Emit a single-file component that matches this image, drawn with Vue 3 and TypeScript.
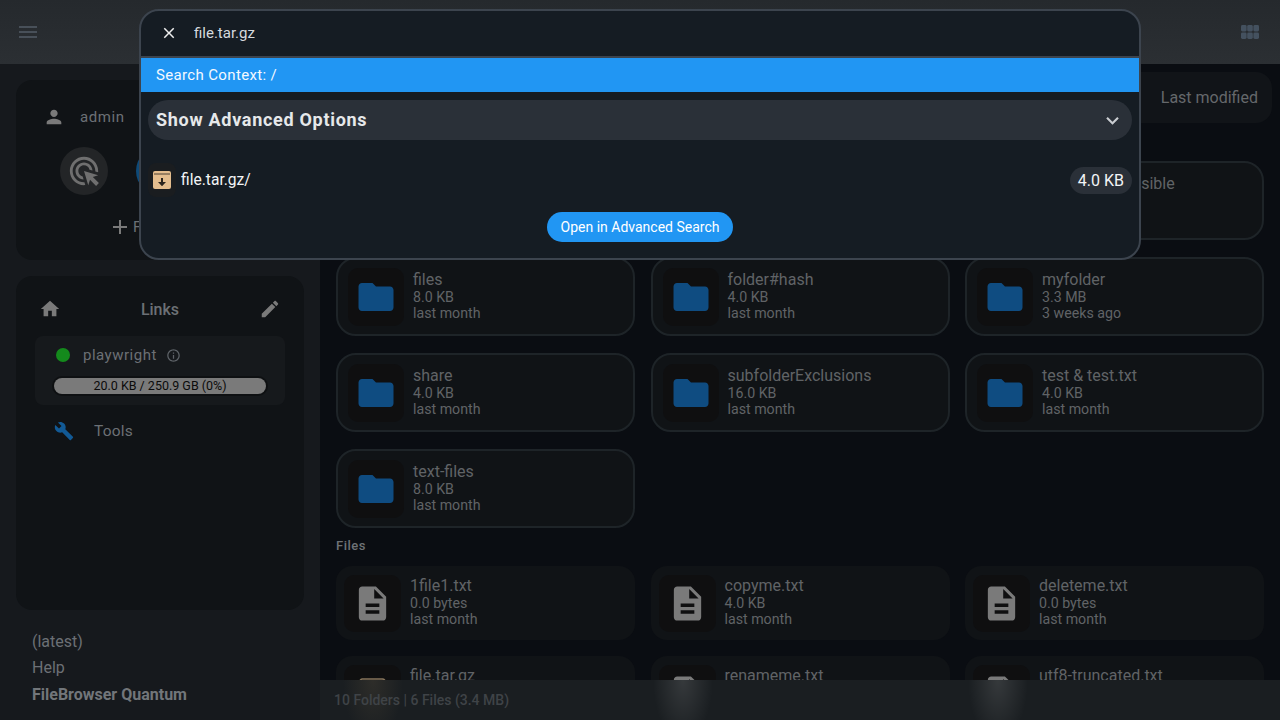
<script setup lang="ts">
const icons = {
  menu: 'M3 18h18v-2H3v2zm0-5h18v-2H3v2zm0-7v2h18V6H3z',
  close: 'M19 6.41L17.59 5 12 10.59 6.41 5 5 6.41 10.59 12 5 17.59 6.41 19 12 13.41 17.59 19 19 17.59 13.41 12z',
  person: 'M12 12c2.21 0 4-1.79 4-4s-1.79-4-4-4-4 1.79-4 4 1.79 4 4 4zm0 2c-2.67 0-8 1.34-8 4v2h16v-2c0-2.66-5.33-4-8-4z',
  click: 'M11.71,17.99C8.53,17.84,6,15.22,6,12c0-3.31,2.69-6,6-6c3.22,0,5.84,2.53,5.99,5.71l-2.1-0.63C15.48,9.31,13.89,8,12,8c-2.21,0-4,1.79-4,4c0,1.89,1.31,3.48,3.08,3.89L11.71,17.99z M22,12c0,0.3-0.01,0.6-0.04,0.9l-1.97-0.59C20,12.21,20,12.1,20,12c0-4.42-3.58-8-8-8s-8,3.58-8,8s3.58,8,8,8c0.1,0,0.21,0,0.31-0.01l0.59,1.97C12.6,21.99,12.3,22,12,22C6.48,22,2,17.52,2,12C2,6.48,6.48,2,12,2S22,6.48,22,12z M18.23,16.26L22,15l-10-3l3,10l1.26-3.77l4.27,4.27l1.98-1.98L18.23,16.26z',
  plus: 'M19 13h-6v6h-2v-6H5v-2h6V5h2v6h6v2z',
  home: 'M10 20v-6h4v6h5v-8h3L12 3 2 12h3v8z',
  edit: 'M3 17.25V21h3.75L17.81 9.94l-3.75-3.75L3 17.25zM20.71 7.04c.39-.39.39-1.02 0-1.41l-2.34-2.34c-.39-.39-1.02-.39-1.41 0l-1.83 1.83 3.75 3.75 1.83-1.83z',
  info: 'M11 7h2v2h-2zm0 4h2v6h-2zm1-9C6.48 2 2 6.48 2 12s4.48 10 10 10 10-4.48 10-10S17.52 2 12 2zm0 18c-4.41 0-8-3.59-8-8s3.59-8 8-8 8 3.59 8 8-3.59 8-8 8z',
  build: 'M22.7 19l-9.1-9.1c.9-2.3.4-5-1.5-6.9-2-2-5-2.4-7.4-1.3L9 6 6 9 1.6 4.7C.4 7.1.9 10.1 2.9 12.1c1.9 1.9 4.6 2.4 6.9 1.5l9.1 9.1c.4.4 1 .4 1.4 0l2.3-2.3c.5-.4.5-1.1.1-1.4z',
  folder: 'M10 4H4c-1.1 0-1.99.9-1.99 2L2 18c0 1.1.9 2 2 2h16c1.1 0 2-.9 2-2V8c0-1.1-.9-2-2-2h-8l-2-2z',
  file: 'M14 2H6c-1.1 0-1.99.9-1.99 2L4 20c0 1.1.89 2 1.99 2H18c1.1 0 2-.9 2-2V8l-6-6zm2 16H8v-2h8v2zm0-4H8v-2h8v2zm-3-5V3.5L18.5 9H13z',
  more: 'M16.59 8.59L12 13.17 7.41 8.59 6 10l6 6 6-6z',
  archive: 'M20.54 5.23l-1.39-1.68C18.88 3.21 18.47 3 18 3H6c-.47 0-.88.21-1.16.55L3.46 5.23C3.17 5.57 3 6.02 3 6.5V19c0 1.1.9 2 2 2h14c1.1 0 2-.9 2-2V6.5c0-.48-.17-.93-.46-1.27zM12 17.5L6.5 12H10v-2h4v2h3.5L12 17.5zM5.12 5l.81-1h12l.94 1H5.12z',
}

const folders = [
  { name: 'alpha', size: '4.0 KB', date: 'last month' },
  { name: 'beta', size: '4.0 KB', date: 'last month' },
  { name: 'filesNotAccessible', size: '4.0 KB', date: 'last month' },
  { name: 'files', size: '8.0 KB', date: 'last month' },
  { name: 'folder#hash', size: '4.0 KB', date: 'last month' },
  { name: 'myfolder', size: '3.3 MB', date: '3 weeks ago' },
  { name: 'share', size: '4.0 KB', date: 'last month' },
  { name: 'subfolderExclusions', size: '16.0 KB', date: 'last month' },
  { name: 'test & test.txt', size: '4.0 KB', date: 'last month' },
  { name: 'text-files', size: '8.0 KB', date: 'last month' },
]

const files = [
  { name: '1file1.txt', size: '0.0 bytes', date: 'last month', archive: false },
  { name: 'copyme.txt', size: '4.0 KB', date: 'last month', archive: false },
  { name: 'deleteme.txt', size: '0.0 bytes', date: 'last month', archive: false },
  { name: 'file.tar.gz', size: '4.0 KB', date: 'last month', archive: true },
  { name: 'renameme.txt', size: '4.0 KB', date: 'last month', archive: false },
  { name: 'utf8-truncated.txt', size: '4.0 KB', date: 'last month', archive: false },
]
</script>

<template>
  <div class="page">
    <header class="topbar">
      <svg class="top-icon" viewBox="0 0 24 24"><path :d="icons.menu" /></svg>
      <svg class="apps-icon" viewBox="0 0 18 14">
        <rect v-for="n in 6" :key="n" :x="((n - 1) % 3) * 6.2" :y="n > 3 ? 7.6 : 0" width="5.6" height="6.4" rx="1.4" />
      </svg>
    </header>

    <div class="body">
      <aside class="sidebar">
        <section class="side-card user-card">
          <div class="user-row">
            <svg class="icon-22" viewBox="0 0 24 24"><path :d="icons.person" /></svg>
            <span>admin</span>
          </div>
          <div class="circle-row">
            <div class="circle">
              <svg viewBox="0 0 24 24"><path :d="icons.click" /></svg>
            </div>
            <div class="circle blue"></div>
          </div>
          <div class="add-row">
            <svg viewBox="0 0 24 24"><path :d="icons.plus" /></svg>
            <span>File sources</span>
          </div>
        </section>

        <section class="side-card links-card">
          <div class="links-head">
            <svg class="icon-22" viewBox="0 0 24 24"><path :d="icons.home" /></svg>
            <span>Links</span>
            <svg class="icon-22" viewBox="0 0 24 24"><path :d="icons.edit" /></svg>
          </div>
          <div class="source">
            <div class="source-name">
              <i class="dot"></i>
              <span>playwright</span>
              <svg viewBox="0 0 24 24"><path :d="icons.info" /></svg>
            </div>
            <div class="usage">20.0 KB / 250.9 GB (0%)</div>
          </div>
          <div class="tools">
            <svg viewBox="0 0 24 24"><path :d="icons.build" /></svg>
            <span>Tools</span>
          </div>
        </section>

        <footer class="side-foot">
          <span>(latest)</span>
          <span>Help</span>
          <strong>FileBrowser Quantum</strong>
        </footer>
      </aside>

      <main class="main">
        <div class="listing">
          <div class="sortbar"><span>Last modified</span></div>
          <h2 class="label folders-label">Folders</h2>
          <div class="grid folder-grid">
            <div v-for="f in folders" :key="f.name" class="item folder-item">
              <div class="thumb">
                <svg viewBox="0 0 24 24"><path :d="icons.folder" /></svg>
              </div>
              <div class="meta">
                <div class="name">{{ f.name }}</div>
                <div>{{ f.size }}</div>
                <div>{{ f.date }}</div>
              </div>
            </div>
          </div>
          <h2 class="label">Files</h2>
          <div class="grid file-grid">
            <div v-for="f in files" :key="f.name" class="item file-item">
              <div class="thumb" :class="{ tar: f.archive }">
                <svg viewBox="0 0 24 24"><path :d="f.archive ? icons.archive : icons.file" /></svg>
              </div>
              <div class="meta">
                <div class="name">{{ f.name }}</div>
                <div>{{ f.size }}</div>
                <div>{{ f.date }}</div>
              </div>
            </div>
          </div>
        </div>
        <div class="status">10 Folders | 6 Files (3.4 MB)</div>
      </main>
    </div>

    <div class="search">
      <div class="search-input">
        <svg viewBox="0 0 24 24"><path :d="icons.close" /></svg>
        <span>file.tar.gz</span>
      </div>
      <div class="context">Search Context: /</div>
      <div class="advanced">
        <span>Show Advanced Options</span>
        <svg viewBox="0 0 24 24"><path :d="icons.more" /></svg>
      </div>
      <div class="result">
        <div class="result-thumb">
          <svg viewBox="0 0 24 24">
            <rect x="3" y="3" width="18" height="18" rx="2" fill="#e3bd8e" />
            <path d="M4 6h16" stroke="#3a3128" stroke-width="0.9" fill="none" />
            <path d="M11 10h2v4h3l-4 4.2L8 14h3z" fill="#2a241d" />
          </svg>
        </div>
        <span class="result-name">file.tar.gz/</span>
        <span class="result-size">4.0 KB</span>
      </div>
      <div class="open-wrap"><button class="open">Open in Advanced Search</button></div>
    </div>
  </div>
</template>

<style>
html,
body {
  margin: 0;
  background: #0a0d12;
}
</style>

<style scoped>
.page {
  position: relative;
  width: 1280px;
  height: 720px;
  overflow: hidden;
  display: flex;
  flex-direction: column;
  font-family: Roboto, 'Liberation Sans', sans-serif;
  background: #0a0d12;
}

svg {
  fill: currentColor;
  display: block;
  flex: none;
}

.topbar {
  height: 64px;
  flex: none;
  display: flex;
  align-items: center;
  justify-content: space-between;
  padding: 0 21px 0 16px;
  background: linear-gradient(#25292d, #2b2f33);
}

.top-icon {
  width: 24px;
  height: 24px;
  color: #485059;
}

.apps-icon {
  width: 18px;
  height: 14px;
  fill: #44515f;
}

.body {
  flex: 1;
  display: flex;
  min-height: 0;
}

.sidebar {
  width: 320px;
  flex: none;
  box-sizing: border-box;
  padding: 16px 16px 0;
  background: #16191d;
  display: flex;
  flex-direction: column;
  gap: 16px;
  color: #6c7075;
}

.side-card {
  flex: none;
  background: #101316;
  border-radius: 16px;
  box-sizing: border-box;
}

.user-card {
  height: 180px;
  padding: 24px 0 0 27px;
}

.icon-22 {
  width: 22px;
  height: 22px;
  color: #7a7a7a;
}

.user-row {
  display: flex;
  align-items: center;
  gap: 15px;
  font-size: 15px;
  letter-spacing: 0.6px;
  height: 26px;
}

.circle-row {
  display: flex;
  gap: 28px;
  margin: 17px 0 0 17px;
}

.circle {
  width: 48px;
  height: 48px;
  border-radius: 50%;
  background: #232527;
  display: flex;
  align-items: center;
  justify-content: center;
  color: #6f6f6f;
}

.circle svg {
  width: 34px;
  height: 34px;
}

.circle.blue {
  background: #0e4a78;
}

.add-row {
  display: flex;
  align-items: center;
  gap: 1px;
  margin: 20px 0 0 65px;
  font-size: 15px;
  color: #6c7075;
}

.add-row svg {
  width: 24px;
  height: 24px;
  color: #7a7a7a;
}

.links-card {
  height: 334px;
  padding: 21px 19px 0;
}

.links-head {
  display: flex;
  align-items: center;
  justify-content: space-between;
  height: 24px;
  padding: 0 4px;
  font-size: 16px;
  font-weight: 500;
}

.source {
  margin-top: 15px;
  height: 69px;
  box-sizing: border-box;
  padding: 8px 16px 0;
  background: #16191c;
  border-radius: 8px;
}

.source-name {
  display: flex;
  align-items: center;
  font-size: 15px;
  letter-spacing: 0.5px;
  height: 22px;
  gap: 9px;
}

.source-name span {
  margin-left: 1px;
}

.source-name svg {
  width: 15px;
  height: 15px;
  color: #5e6368;
}

.dot {
  width: 14px;
  height: 14px;
  margin: 0 3px 0 5px;
  border-radius: 50%;
  background: #148a1c;
  display: block;
}

.usage {
  margin: 12px 3px 0;
  height: 16px;
  line-height: 16px;
  border-radius: 10px;
  background: #7a7a7a;
  box-shadow: 0 0 0 2px #0e1012;
  color: #0b0b0b;
  font-size: 12.5px;
  text-align: center;
}

.tools {
  display: flex;
  align-items: center;
  gap: 20px;
  height: 22px;
  margin: 15px 0 0 19px;
  font-size: 15.5px;
  letter-spacing: 0.2px;
}

.tools svg {
  width: 20px;
  height: 20px;
  color: #125a96;
}

.side-foot {
  display: flex;
  flex-direction: column;
  padding: 3px 16px 0;
  font-size: 16px;
  line-height: 26.4px;
  color: #6c7075;
}

.side-foot strong {
  font-weight: 700;
  color: #72767a;
}

.main {
  flex: 1;
  min-width: 0;
  display: flex;
  flex-direction: column;
  color: #606366;
}

.listing {
  flex: 1;
  min-height: 0;
  overflow: hidden;
  box-sizing: border-box;
  padding: 8px 16px 0;
}

.sortbar {
  height: 50px;
  margin-right: -8px;
  display: flex;
  align-items: center;
  justify-content: flex-end;
  padding: 0 14px 1px 0;
  background: #111418;
  border-radius: 16px;
  font-size: 16px;
  color: #65686b;
}

.label {
  margin: 0;
  font-size: 13px;
  font-weight: 500;
  color: #6e7276;
  letter-spacing: 0.5px;
  line-height: 16px;
  padding-top: 10px;
  height: 22px;
}

.folders-label {
  padding-top: 0;
  margin-top: 16px;
  height: 22px;
}

.grid {
  display: grid;
  grid-template-columns: repeat(3, 299px);
  column-gap: 15.5px;
}

.folder-grid {
  grid-auto-rows: 79px;
  row-gap: 17px;
}

.file-grid {
  margin-top: 6px;
  grid-auto-rows: 74px;
  row-gap: 16px;
}

.item {
  display: flex;
  align-items: center;
  box-sizing: border-box;
  background: #101316;
  font-size: 14.2px;
  line-height: 16px;
}

.meta {
  margin-top: -2px;
}

.folder-item {
  border: 2px solid #1e2428;
  border-radius: 20px;
  padding-left: 10px;
  gap: 9px;
}

.file-item {
  border-radius: 16px;
  padding-left: 8px;
  gap: 9px;
}

.thumb {
  width: 56px;
  height: 58px;
  flex: none;
  display: flex;
  align-items: center;
  justify-content: center;
  background: #0f0f10;
  border-radius: 10px;
  color: #7a7a7a;
}

.file-item .thumb {
  width: 57px;
  height: 57px;
}

.thumb svg {
  width: 41px;
  height: 41px;
}

.folder-item .thumb {
  color: #0f4c81;
}

.folder-item .thumb svg {
  width: 42px;
  height: 42px;
}

.thumb.tar {
  color: #86745b;
}

.name {
  font-size: 16px;
  line-height: 18px;
  color: #606366;
}

.status {
  height: 40px;
  flex: none;
  line-height: 40px;
  padding-left: 14px;
  background:
    radial-gradient(ellipse 30px 62px at 53px 0, rgba(150, 125, 85, 0.16), transparent),
    radial-gradient(ellipse 30px 62px at 363px 0, rgba(255, 255, 255, 0.12), transparent),
    radial-gradient(ellipse 30px 62px at 678px 0, rgba(255, 255, 255, 0.12), transparent),
    #1a1e21;
  font-size: 14px;
  font-weight: 500;
  color: #3f4347;
}

.search {
  position: absolute;
  left: 139px;
  top: 9px;
  width: 1002px;
  height: 251px;
  box-sizing: border-box;
  display: flex;
  flex-direction: column;
  border: 2px solid #3c444e;
  border-radius: 20px;
  background: #151c23;
  overflow: hidden;
  color: #fff;
}

.search-input {
  height: 43px;
  flex: none;
  display: flex;
  align-items: center;
  gap: 16px;
  padding: 0 0 2px 19px;
  font-size: 15px;
  border-bottom: 2px solid #3c444e;
  color: #d6dade;
}

.search-input svg {
  width: 18px;
  height: 18px;
  color: #eee;
}

.context {
  height: 34px;
  flex: none;
  line-height: 34px;
  padding-left: 15px;
  background: #2196f3;
  font-size: 15px;
  letter-spacing: 0.35px;
  color: #f4f9ff;
}

.advanced {
  margin: 8px 7px 0;
  height: 40px;
  flex: none;
  display: flex;
  align-items: center;
  justify-content: space-between;
  padding: 0 7px 0 8px;
  background: #2a3038;
  border-radius: 20px;
  font-size: 18px;
  font-weight: 700;
  letter-spacing: 0.7px;
  color: #e6e8ea;
}

.advanced span {
  margin-bottom: 1px;
}

.advanced svg {
  width: 25px;
  height: 25px;
  color: #c9ccd0;
}

.result {
  margin: 20px 7px 0;
  height: 40px;
  flex: none;
  display: flex;
  align-items: center;
  font-size: 15.6px;
  color: #f2f4f6;
}

.result-thumb {
  width: 28px;
  height: 34px;
  display: flex;
  align-items: center;
  justify-content: center;
  background: #1a1d20;
  border-radius: 8px;
  margin-right: 5px;
}

.result-thumb svg {
  width: 24px;
  height: 24px;
}

.result-name {
  flex: 1;
}

.result-size {
  height: 27px;
  line-height: 27px;
  padding: 0 8px;
  border-radius: 14px;
  background: #2a3038;
  font-size: 16px;
}

.open-wrap {
  display: flex;
  justify-content: center;
  margin-top: 12px;
}

.open {
  height: 30px;
  width: 186px;
  border: none;
  padding: 0;
  border-radius: 15px;
  background: #2196f3;
  color: #fff;
  font: 14px Roboto, 'Liberation Sans', sans-serif;
}
</style>
